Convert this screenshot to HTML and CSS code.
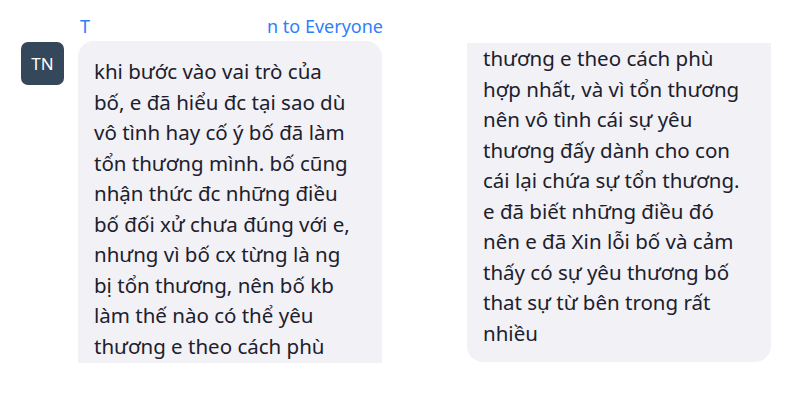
FILE: index.html
```html
<!DOCTYPE html>
<html lang="vi">
<head>
  <meta charset="UTF-8">
  <meta name="viewport" content="width=device-width, initial-scale=1.0">
  <title>Chat</title>
  <link rel="stylesheet" href="styles.css">
</head>
<body>
  <div class="chat">
    <div class="message">
      <div class="avatar">TN</div>
      <div class="message-body">
        <div class="sender">
          <span>T</span><span class="sender-hidden"></span><span>n to Everyone</span>
        </div>
        <div class="bubble bubble-top">
          khi bước vào vai trò của<br>
          bố, e đã hiểu đc tại sao dù<br>
          vô tình hay cố ý bố đã làm<br>
          tổn thương mình. bố cũng<br>
          nhận thức đc những điều<br>
          bố đối xử chưa đúng với e,<br>
          nhưng vì bố cx từng là ng<br>
          bị tổn thương, nên bố kb<br>
          làm thế nào có thể yêu<br>
          thương e theo cách phù
        </div>
      </div>
    </div>

    <div class="bubble bubble-bottom">
      thương e theo cách phù<br>
      hợp nhất, và vì tổn thương<br>
      nên vô tình cái sự yêu<br>
      thương đấy dành cho con<br>
      cái lại chứa sự tổn thương.<br>
      e đã biết những điều đó<br>
      nên e đã Xin lỗi bố và cảm<br>
      thấy có sự yêu thương bố<br>
      that sự từ bên trong rất<br>
      nhiều
    </div>
  </div>
</body>
</html>
```

FILE: styles.css
```css
* {
  margin: 0;
  padding: 0;
  box-sizing: border-box;
}

body {
  font-family: "Noto Sans", "Open Sans", sans-serif;
  background: #fff;
  color: #20202c;
}

.chat {
  display: flex;
  align-items: flex-start;
  padding: 14px 0 0 21px;
}

.message {
  display: flex;
  align-items: flex-start;
  gap: 14px;
}

.avatar {
  width: 43px;
  height: 43px;
  margin-top: 28px;
  border-radius: 7px;
  background: #34475b;
  color: #fff;
  font-size: 17px;
  display: flex;
  align-items: center;
  justify-content: center;
}

.message-body {
  width: 304px;
  flex-shrink: 0;
}

.sender {
  display: flex;
  padding-left: 2px;
  height: 27px;
  font-size: 18px;
  line-height: 24px;
  color: #2d7ff9;
  white-space: nowrap;
}

.sender-hidden {
  width: 177px;
  flex-shrink: 0;
}

.bubble {
  width: 304px;
  flex-shrink: 0;
  background: #f1f1f6;
  padding: 0 16px;
  font-size: 20.5px;
  line-height: 30.5px;
}

.bubble-top {
  height: 322px;
  padding-top: 15px;
  border-radius: 16px 16px 0 0;
}

.bubble-bottom {
  height: 319px;
  margin-top: 29px;
  margin-left: 85px;
  padding-top: 0;
  border-radius: 0 0 16px 16px;
}
```
